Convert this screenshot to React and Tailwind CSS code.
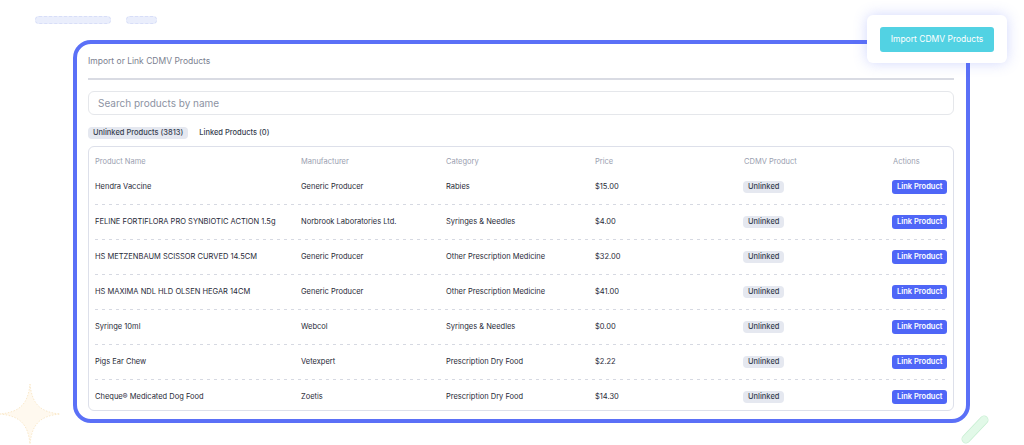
const rows = [
  { name: 'Hendra Vaccine', maker: 'Generic Producer', cat: 'Rabies', price: '$15.00' },
  { name: 'FELINE FORTIFLORA PRO SYNBIOTIC ACTION 1.5g', maker: 'Norbrook Laboratories Ltd.', cat: 'Syringes & Needles', price: '$4.00' },
  { name: 'HS METZENBAUM SCISSOR CURVED 14.5CM', maker: 'Generic Producer', cat: 'Other Prescription Medicine', price: '$32.00' },
  { name: 'HS MAXIMA NDL HLD OLSEN HEGAR 14CM', maker: 'Generic Producer', cat: 'Other Prescription Medicine', price: '$41.00' },
  { name: 'Syringe 10ml', maker: 'Webcol', cat: 'Syringes & Needles', price: '$0.00' },
  { name: 'Pigs Ear Chew', maker: 'Vetexpert', cat: 'Prescription Dry Food', price: '$2.22' },
  { name: 'Cheque® Medicated Dog Food', maker: 'Zoetis', cat: 'Prescription Dry Food', price: '$14.30' },
];

const cols = 'grid grid-cols-[206px_145px_149px_149px_149px_1fr] pl-[6px]';

function Star() {
  return (
    <svg width="64" height="64" viewBox="0 0 64 64" className="absolute left-[-2px] top-[382px]">
      <path
        d="M32 2 C34 22 42 30 62 32 C42 34 34 42 32 62 C30 42 22 34 2 32 C22 30 30 22 32 2 Z"
        fill="#fff9ef"
        stroke="#f8e3bf"
        strokeWidth="0.8"
        strokeDasharray="1.5 1.5"
      />
    </svg>
  );
}

function GreenPill() {
  return (
    <svg width="30" height="30" viewBox="0 0 30 30" className="absolute left-[960px] top-[414px]">
      <line x1="6" y1="25" x2="24" y2="6" stroke="#c6eed1" strokeWidth="9" strokeLinecap="round" />
      <line x1="6" y1="25" x2="24" y2="6" stroke="#e2f9e8" strokeWidth="7.5" strokeLinecap="round" />
    </svg>
  );
}

function Dashes() {
  return <div className="mx-[6px] h-px bg-[repeating-linear-gradient(to_right,#d6d9e2_0_3px,transparent_3px_7px)]" />;
}

export default function App() {
  return (
    <div className="relative w-full h-[445px] overflow-hidden bg-white font-['Inter','Liberation_Sans',sans-serif] text-[#1f2937]">
      <div className="absolute left-[35px] top-[16px] w-[76px] h-[8px] rounded-full bg-[#eaeefc] border border-dashed border-[#d8def8]" />
      <div className="absolute left-[126px] top-[16px] w-[31px] h-[8px] rounded-full bg-[#eaeefc] border border-dashed border-[#d8def8]" />
      <Star />
      <GreenPill />

      <div className="ml-[73px] mt-[40px] w-[897px] h-[383px] border-4 border-[#5b70f7] rounded-[18px] bg-white pl-[11px] pr-[12px] pt-[11px] flex flex-col">
        <div className="text-[8.5px] leading-[12px] text-[#7b8190]">Import or Link CDMV Products</div>
        <div className="mt-[11px] h-[2px] bg-[#d9dbe3]" />
        <div className="mt-[11px] h-[24px] border border-[#e5e7eb] rounded-[6px] flex items-center pl-[9px] text-[10px] text-[#8d93a3]">
          Search products by name
        </div>
        <div className="mt-[12px] flex items-center gap-[11px] text-[7.5px] font-medium">
          <span className="bg-[#e5e8f0] rounded-[4px] px-[5px] h-[12px] flex items-center text-[#374151]">Unlinked Products (3813)</span>
          <span className="text-[#374151]">Linked Products (0)</span>
        </div>
        <div className="mt-[7px] h-[265px] border-[1.5px] border-[#dde0ea] rounded-[6px] overflow-hidden">
          <div className={`${cols} h-[23px] pt-[10px] text-[7.5px] leading-[9px] text-[#9aa0b0]`}>
            <span>Product Name</span>
            <span>Manufacturer</span>
            <span>Category</span>
            <span>Price</span>
            <span>CDMV Product</span>
            <span>Actions</span>
          </div>
          {rows.map((r, i) => (
            <div key={r.name}>
              <div className={`${cols} items-center h-[34px] text-[7.5px] text-[#1f2937]`}>
                <span>{r.name}</span>
                <span>{r.maker}</span>
                <span>{r.cat}</span>
                <span>{r.price}</span>
                <span>
                  <span className="inline-flex items-center h-[12px] px-[5px] -ml-[1px] rounded-[4px] bg-[#e5e8f0] text-[#374151] font-medium">Unlinked</span>
                </span>
                <span>
                  <span className="inline-flex items-center h-[14px] px-[5px] -ml-[1px] rounded-[3px] bg-[#4f66f7] text-white font-semibold">Link Product</span>
                </span>
              </div>
              {i < rows.length - 1 && <Dashes />}
            </div>
          ))}
        </div>
      </div>

      <div className="absolute left-[867px] top-[15px] w-[140px] h-[48px] bg-white rounded-[6px] shadow-[0_0_14px_rgba(91,112,247,0.28)] flex items-center pl-[13px]">
        <div className="w-[114px] h-[25px] rounded-[3px] bg-[#52d2e3] text-white text-[8.5px] flex items-center justify-center">
          Import CDMV Products
        </div>
      </div>
    </div>
  );
}
